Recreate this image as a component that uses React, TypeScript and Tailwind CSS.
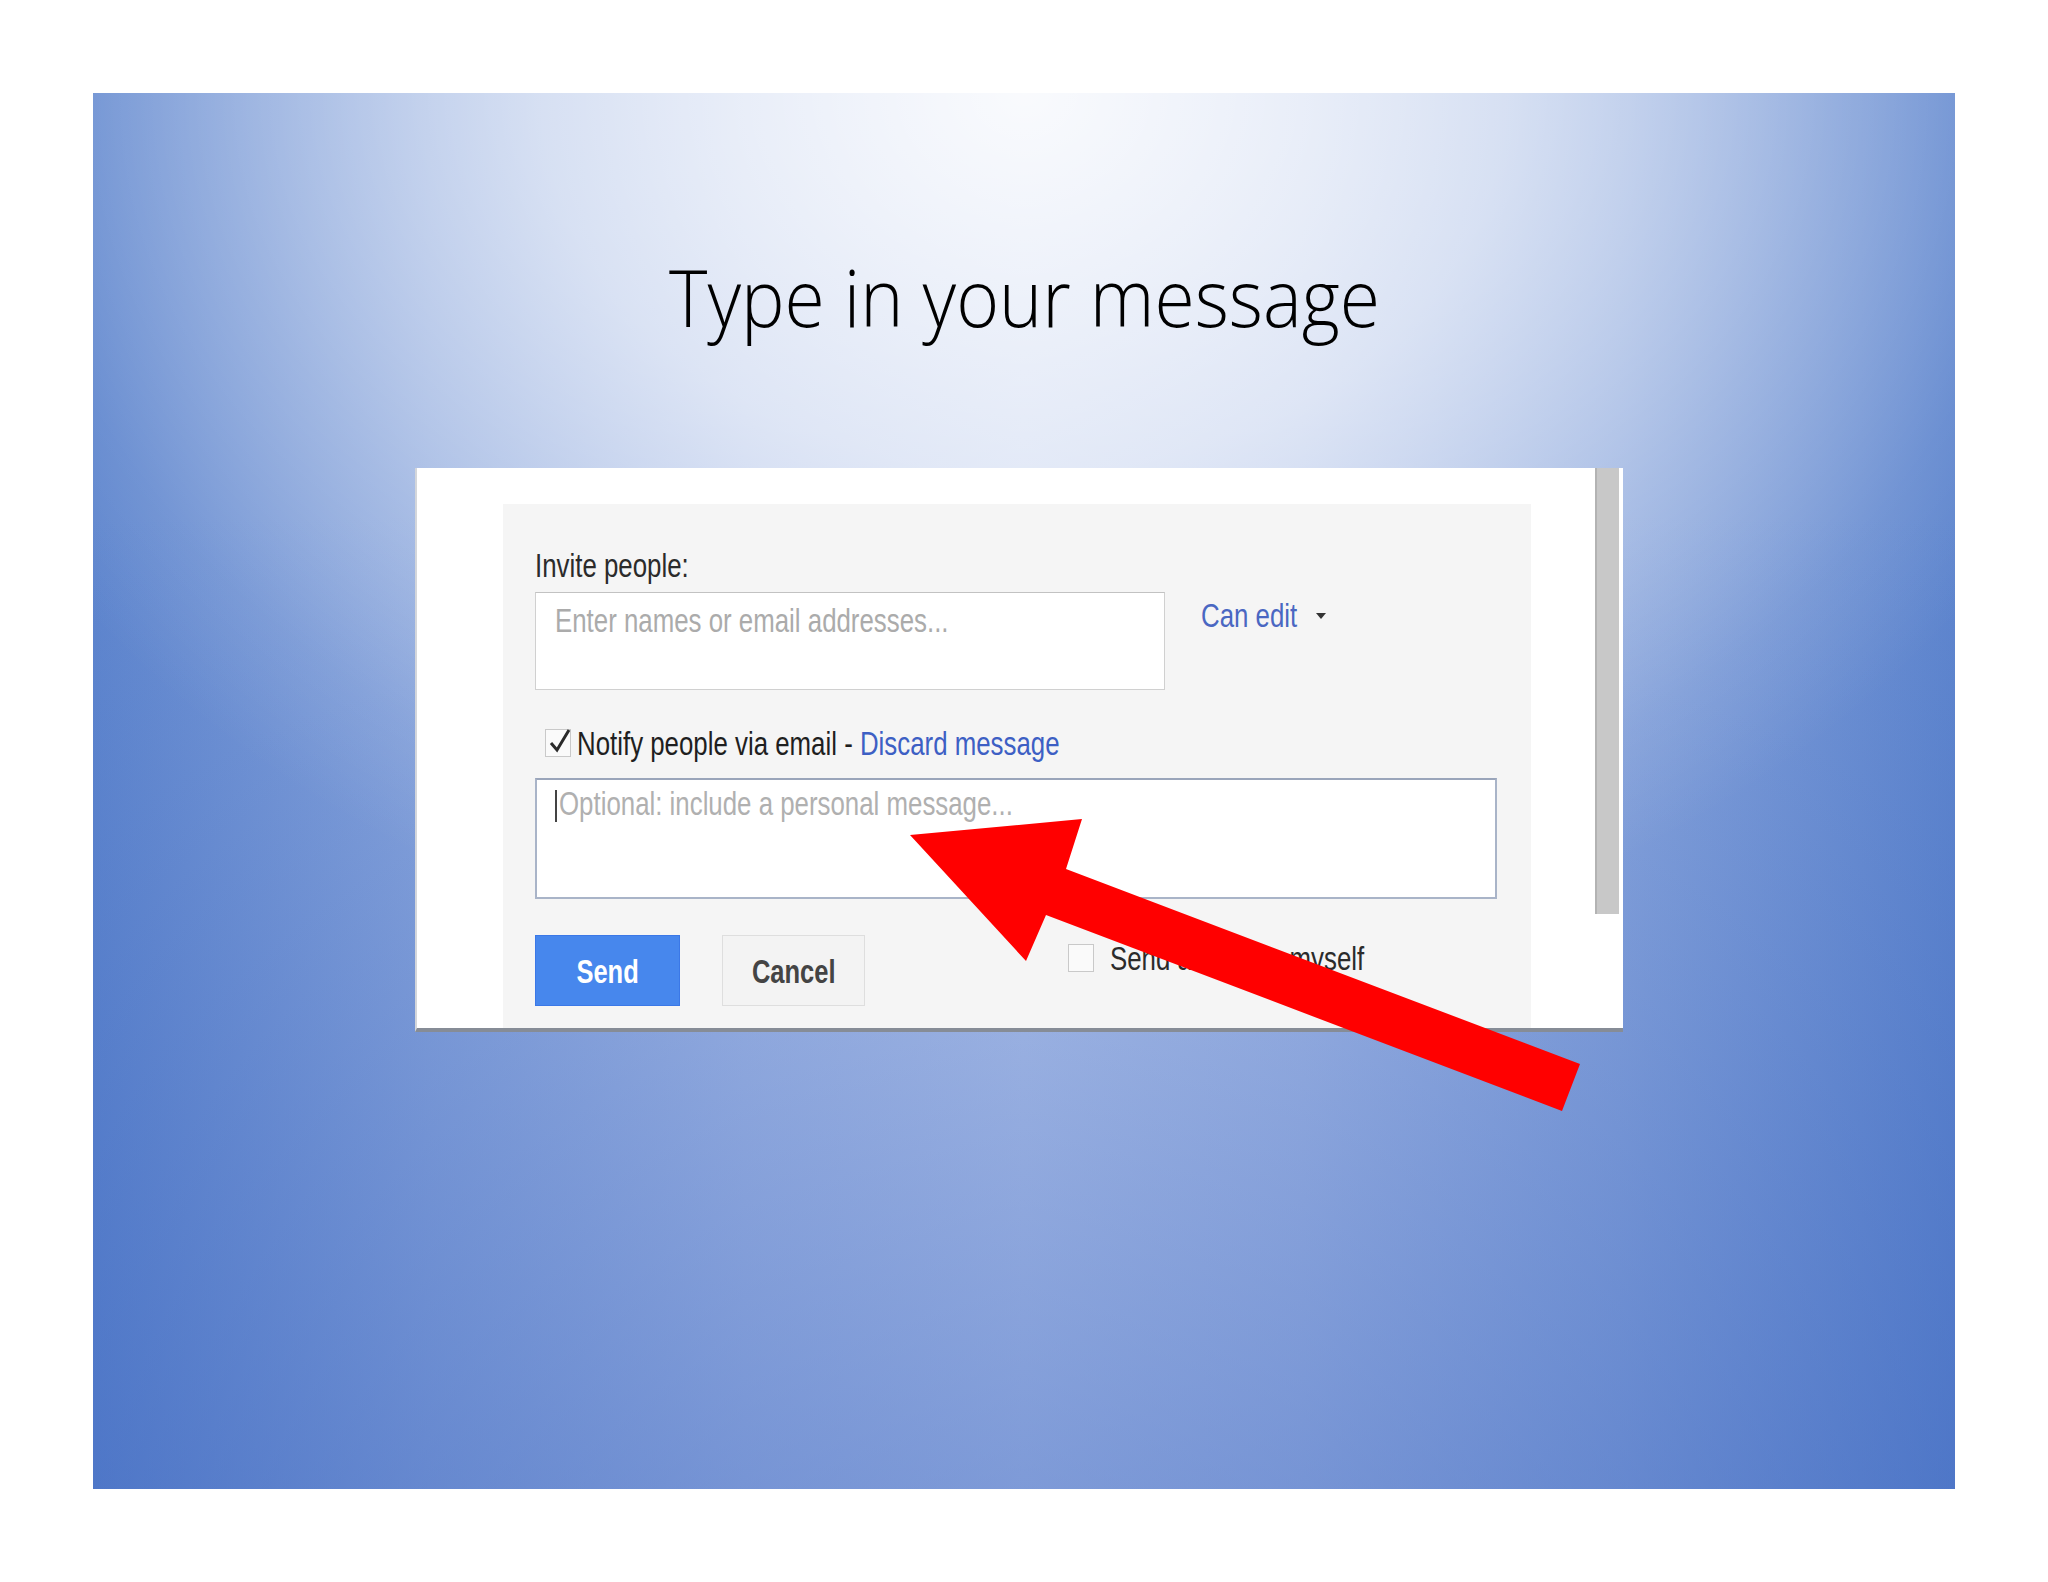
import React from 'react'

const dialogFont = { fontFamily: '"Liberation Sans", Arial, sans-serif' }

function Squeezed({ children, className = '' }: { children: React.ReactNode; className?: string }) {
  // the source screenshot is squashed sideways, so the dialog text is narrowed
  return <span className={`inline-block origin-left scale-x-[0.76] whitespace-nowrap ${className}`}>{children}</span>
}

function CheckBox({ checked }: { checked?: boolean }) {
  return (
    <div className="relative w-[26px] h-[28px] shrink-0 border border-[#c9c9c9] bg-[#fafafa]">
      {checked && (
        <svg viewBox="0 0 26 28" className="absolute -top-[4px] left-[1px] w-[26px] h-[28px]">
          <path d="M4 17 L10 24 L22 4" fill="none" stroke="#2a2a2a" strokeWidth="3" />
        </svg>
      )}
    </div>
  )
}

function ShareDialog() {
  return (
    <div className="ml-[322px] mt-[132px] w-[1208px] h-[564px] flex bg-white border-l-2 border-[#d4d6da] border-b-4 border-b-[#868c96]" style={dialogFont}>
      <div className="flex-1 pl-[86px] pt-[36px] flex">
        <div className="w-[1028px] bg-[#f5f5f5] pl-[32px] pt-[42px] text-[34px] leading-[38px]">
          <div className="text-[#2b2b2b]">
            <Squeezed>Invite people:</Squeezed>
          </div>

          <div className="mt-[8px] flex items-start">
            <div className="w-[630px] h-[98px] bg-white border border-[#d0d0d0] border-t-[#c2c2c2] pl-[19px] pt-[8px] text-[#ababab]">
              <Squeezed>Enter names or email addresses...</Squeezed>
            </div>
            <div className="ml-[36px] mt-[4px] flex items-center text-[#4a67c2]">
              <Squeezed>Can edit</Squeezed>
              <span className="-ml-[12px] mt-[2px] w-0 h-0 border-l-[5px] border-r-[5px] border-t-[6px] border-l-transparent border-r-transparent border-t-[#333]" />
            </div>
          </div>

          <div className="mt-[34px] pl-[10px] flex items-center gap-[6px]">
            <CheckBox checked />
            <span className="text-[#1f1f1f]">
              <Squeezed>
                Notify people via email - <span className="text-[#3d5fc4]">Discard message</span>
              </Squeezed>
            </span>
          </div>

          <div className="mt-[16px] w-[962px] h-[121px] bg-white border-2 border-[#a9b4c8] border-t-[#9aa5ba] pl-[18px] pt-[4px] flex items-start text-[#b0b0b0]">
            <span className="mt-[6px] w-[2px] h-[32px] bg-[#444] shrink-0" />
            <span className="ml-[2px]">
              <Squeezed>Optional: include a personal message...</Squeezed>
            </span>
          </div>

          <div className="mt-[36px] flex items-start">
            <button className="w-[145px] h-[71px] bg-[#4787ed] border border-[#3b78e7] text-white font-bold flex items-center justify-center">
              <span className="inline-block scale-x-[0.75]">Send</span>
            </button>
            <button className="ml-[42px] w-[143px] h-[71px] bg-[#f3f3f3] border border-[#dedede] text-[#444] font-bold flex items-center justify-center">
              <span className="inline-block scale-x-[0.75]">Cancel</span>
            </button>
            <div className="ml-[203px] mt-[4px] flex items-center gap-[16px] text-[#2b2b2b]">
              <CheckBox />
              <Squeezed>Send a copy to myself</Squeezed>
            </div>
          </div>
        </div>
      </div>
      <div className="ml-[63px] w-[24px] flex flex-col">
        <div className="h-[446px] bg-[#c8c8c8] border-l-2 border-[#b3b3b3]" />
      </div>
      <div className="w-[4px]" />
    </div>
  )
}

function Arrow() {
  return (
    <svg className="absolute inset-0 pointer-events-none" width="2048" height="1582" viewBox="0 0 2048 1582">
      <polygon
        points="910,835 1082,819 1066,869 1580,1064 1562,1111 1046,915 1026,961"
        fill="#ff0000"
      />
    </svg>
  )
}

export default function App() {
  return (
    <div className="relative w-[2048px] h-[1582px] bg-white pt-[93px] pl-[93px]">
      <div className="w-[1862px] h-[1396px] flex flex-col bg-[radial-gradient(1150px_900px_at_50%_0%,rgba(255,255,255,0.92)_0%,rgba(255,255,255,0.62)_42%,rgba(255,255,255,0.28)_70%,rgba(255,255,255,0.08)_88%,rgba(255,255,255,0)_100%),linear-gradient(to_bottom,rgba(58,100,192,0)_30%,rgba(58,100,192,0.45)_100%),linear-gradient(to_right,#5f86ce_0%,#8aa6dc_18%,#a8bce6_35%,#b6c7eb_50%,#a8bce6_65%,#8aa6dc_82%,#5f86ce_100%)]">
        <h1
          className="mt-[163px] text-center text-[80px] leading-[80px] font-light text-black"
          style={{ fontFamily: '"Open Sans", "Noto Sans", sans-serif' }}
        >
          <span className="inline-block scale-x-[0.915]">Type in your message</span>
        </h1>
        <ShareDialog />
      </div>
      <Arrow />
    </div>
  )
}
